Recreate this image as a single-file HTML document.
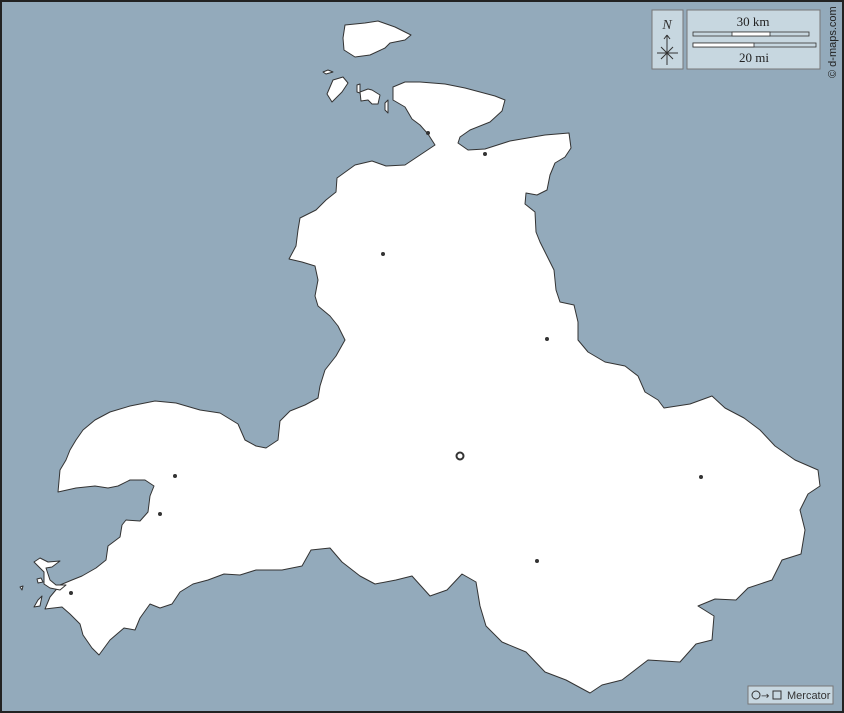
<!DOCTYPE html>
<html><head><style>
html,body{margin:0;padding:0;background:#93aabb;}
svg{display:block;}
</style></head><body>
<svg width="844" height="713" viewBox="0 0 844 713" xmlns="http://www.w3.org/2000/svg">
<rect x="0" y="0" width="844" height="713" fill="#93aabb"/>
<g fill="#fff" stroke="#333" stroke-width="1" stroke-linejoin="round">
<path d="M337,178 L355,165 L372,161 L386,166 L405,165 L420,155 L435,145 L428,134 L420,125 L412,119 L405,107 L393,100 L393,87 L405,82 L420,82 L445,84 L465,88 L495,96 L505,100 L502,111 L490,122 L470,130 L460,137 L458,143 L468,150 L485,149 L510,141 L545,135 L569,133 L571,148 L565,157 L555,163 L550,175 L547,190 L537,195 L526,193 L525,204 L535,212 L536,232 L540,242 L548,258 L554,270 L556,290 L560,302 L574,305 L578,322 L578,340 L588,352 L605,362 L625,366 L638,376 L645,392 L658,400 L664,408 L690,404 L712,396 L725,408 L744,418 L760,430 L775,446 L795,460 L818,470 L820,486 L808,494 L800,510 L805,530 L801,554 L782,560 L772,580 L748,588 L736,600 L715,599 L698,606 L714,616 L712,640 L696,644 L680,662 L648,660 L622,680 L602,685 L590,693 L566,680 L545,672 L526,652 L502,642 L486,626 L480,606 L476,582 L462,574 L447,590 L430,596 L412,576 L396,580 L375,584 L360,576 L342,562 L330,548 L311,550 L302,566 L282,570 L256,570 L240,575 L224,574 L208,580 L193,584 L180,592 L172,604 L160,608 L150,604 L140,618 L135,630 L124,628 L110,640 L99,655 L92,648 L83,635 L80,624 L70,614 L62,607 L45,609 L50,597 L60,585 L72,580 L82,576 L96,568 L106,560 L108,546 L120,537 L122,525 L126,520 L140,521 L148,512 L150,496 L154,486 L145,480 L130,480 L118,486 L108,488 L95,486 L76,488 L58,492 L60,470 L66,460 L70,450 L76,440 L83,430 L95,420 L110,412 L130,406 L155,401 L176,403 L200,410 L220,413 L238,424 L245,440 L256,446 L266,448 L278,440 L280,421 L290,411 L305,405 L318,398 L320,386 L325,370 L336,356 L345,340 L338,326 L330,316 L318,306 L315,296 L318,280 L315,266 L302,262 L289,259 L296,246 L298,230 L300,218 L316,210 L326,200 L336,192 Z"/>
<path d="M345,25 L365,23 L378,21 L395,27 L411,35 L405,40 L390,43 L385,48 L370,55 L355,57 L344,50 L343,38 Z"/>
<path d="M323,72 L328,70 L333,72 L326,74 Z"/>
<path d="M333,80 L343,77 L348,83 L342,92 L332,102 L327,94 Z"/>
<path d="M357,85 L360,84 L360,93 L357,92 Z"/>
<path d="M360,92 L368,89 L372,90 L380,95 L378,104 L372,104 L368,100 L361,101 Z"/>
<path d="M385,103 L388,100 L388,113 L385,110 Z"/>
<path d="M34,562 L40,558 L48,562 L60,561 L52,567 L46,568 L50,580 L56,585 L66,585 L60,590 L50,588 L44,584 L44,572 Z"/>
<path d="M37,579 L41,578 L43,582 L38,583 Z"/>
<path d="M20,587 L23,586 L22,590 Z"/>
<path d="M38,600 L42,596 L40,606 L34,607 Z"/>
</g>
<g fill="#333">
<circle cx="428" cy="133" r="2"/>
<circle cx="485" cy="154" r="2"/>
<circle cx="383" cy="254" r="2"/>
<circle cx="547" cy="339" r="2"/>
<circle cx="175" cy="476" r="2"/>
<circle cx="160" cy="514" r="2"/>
<circle cx="701" cy="477" r="2"/>
<circle cx="537" cy="561" r="2"/>
<circle cx="71" cy="593" r="2"/>
</g>
<circle cx="460" cy="456" r="3.5" fill="#fff" stroke="#333" stroke-width="2"/>
<!-- legend -->
<rect x="652" y="10" width="31" height="59" fill="#c7d7e0" stroke="#777"/>
<text x="667" y="29" font-family="Liberation Serif, serif" font-style="italic" font-size="14" text-anchor="middle" fill="#333">N</text>
<g stroke="#333" stroke-width="1" fill="none">
<line x1="667" y1="35" x2="667" y2="65"/><line x1="664" y1="39" x2="667" y2="35"/><line x1="670" y1="39" x2="667" y2="35"/>
<line x1="657" y1="53" x2="678" y2="53"/><line x1="661" y1="47" x2="673" y2="59"/><line x1="673" y1="47" x2="661" y2="59"/>
</g>
<rect x="687" y="10" width="133" height="59" fill="#c7d7e0" stroke="#777"/>
<text x="753" y="26" font-family="Liberation Serif, serif" font-size="13" text-anchor="middle" fill="#222">30 km</text>
<rect x="693" y="32" width="116" height="4" fill="#c7d7e0" stroke="#333" stroke-width="0.8"/>
<rect x="732" y="32" width="38" height="4" fill="#fff" stroke="#333" stroke-width="0.8"/>
<rect x="693" y="43" width="123" height="4" fill="#c7d7e0" stroke="#333" stroke-width="0.8"/>
<rect x="693" y="43" width="61" height="4" fill="#fff" stroke="#333" stroke-width="0.8"/>
<text x="754" y="62" font-family="Liberation Serif, serif" font-size="13" text-anchor="middle" fill="#222">20 mi</text>
<text transform="translate(836,78) rotate(-90)" font-family="Liberation Sans, sans-serif" font-size="11" fill="#222">© d-maps.com</text>
<rect x="748" y="686" width="85" height="18" fill="#c7d7e0" stroke="#777"/>
<circle cx="756" cy="695" r="4" fill="none" stroke="#333"/>
<text x="761" y="699" font-family="DejaVu Sans, sans-serif" font-size="10" fill="#333">→</text>
<rect x="773" y="691" width="8" height="8" fill="none" stroke="#333"/>
<text x="787" y="699" font-family="Liberation Sans, sans-serif" font-size="11" fill="#333">Mercator</text>
<rect x="1" y="1" width="842" height="711" fill="none" stroke="#222" stroke-width="2"/>
</svg>
</body></html>
